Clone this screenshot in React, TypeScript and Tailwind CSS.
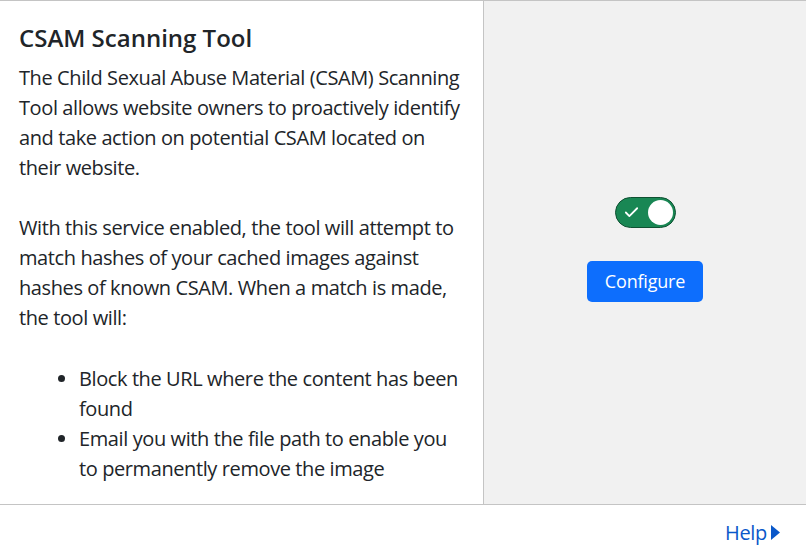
import { Check } from "lucide-react";

export default function App() {
  return (
    <div
      className="w-[806px] h-[554px] bg-white text-[#212529] flex flex-col border-t border-[#c4c4c4] overflow-hidden"
      style={{ fontFamily: '"Open Sans", "Noto Sans", sans-serif' }}
    >
      <div className="flex h-[504px] shrink-0 border-b border-[#c4c4c4]">
        {/* Description */}
        <div className="w-[484px] shrink-0 pl-[19px] pr-[10px] pt-[20px] border-r border-[#c4c4c4] text-[20px] leading-[30px] tracking-[-0.4px]">
          <h2 className="text-[24px] font-semibold leading-[34px] mb-[8px] tracking-[0px]">CSAM Scanning Tool</h2>
          <p className="mb-[30px]">
            The Child Sexual Abuse Material (CSAM) Scanning
            <br />
            Tool allows website owners to proactively identify
            <br />
            and take action on potential CSAM located on
            <br />
            their website.
          </p>
          <p className="mb-[31px]">
            With this service enabled, the tool will attempt to
            <br />
            match hashes of your cached images against
            <br />
            hashes of known CSAM. When a match is made,
            <br />
            the tool will:
          </p>
          <ul className="list-disc pl-[60px]">
            <li>
              Block the URL where the content has been
              <br />
              found
            </li>
            <li>
              Email you with the file path to enable you
              <br />
              to permanently remove the image
            </li>
          </ul>
        </div>

        {/* Controls */}
        <div className="flex-1 bg-[#f1f1f1] flex flex-col items-center pt-[196px]">
          <button className="w-[61px] h-[31px] rounded-full bg-[#198754] border border-[#0f5132] flex items-center justify-between pl-[7px] pr-[2px]">
            <Check size={17} strokeWidth={2.5} className="text-white" />
            <span className="w-[25px] h-[25px] rounded-full bg-white" />
          </button>
          <button className="mt-[33px] w-[116px] h-[41px] rounded-[5px] bg-[#0d6efd] text-white text-[18px] tracking-[-0.2px]">
            Configure
          </button>
        </div>
      </div>

      {/* Footer */}
      <div className="flex-1 flex items-center justify-end pr-[26px] pt-[6px]">
        <a className="text-[#0a58ca] text-[20px] flex items-center gap-[4px] cursor-pointer tracking-[-0.3px]">
          Help
          <svg width="9" height="15" viewBox="0 0 9 15">
            <path d="M0 0 L9 7.5 L0 15 Z" fill="#0a58ca" />
          </svg>
        </a>
      </div>
    </div>
  );
}
